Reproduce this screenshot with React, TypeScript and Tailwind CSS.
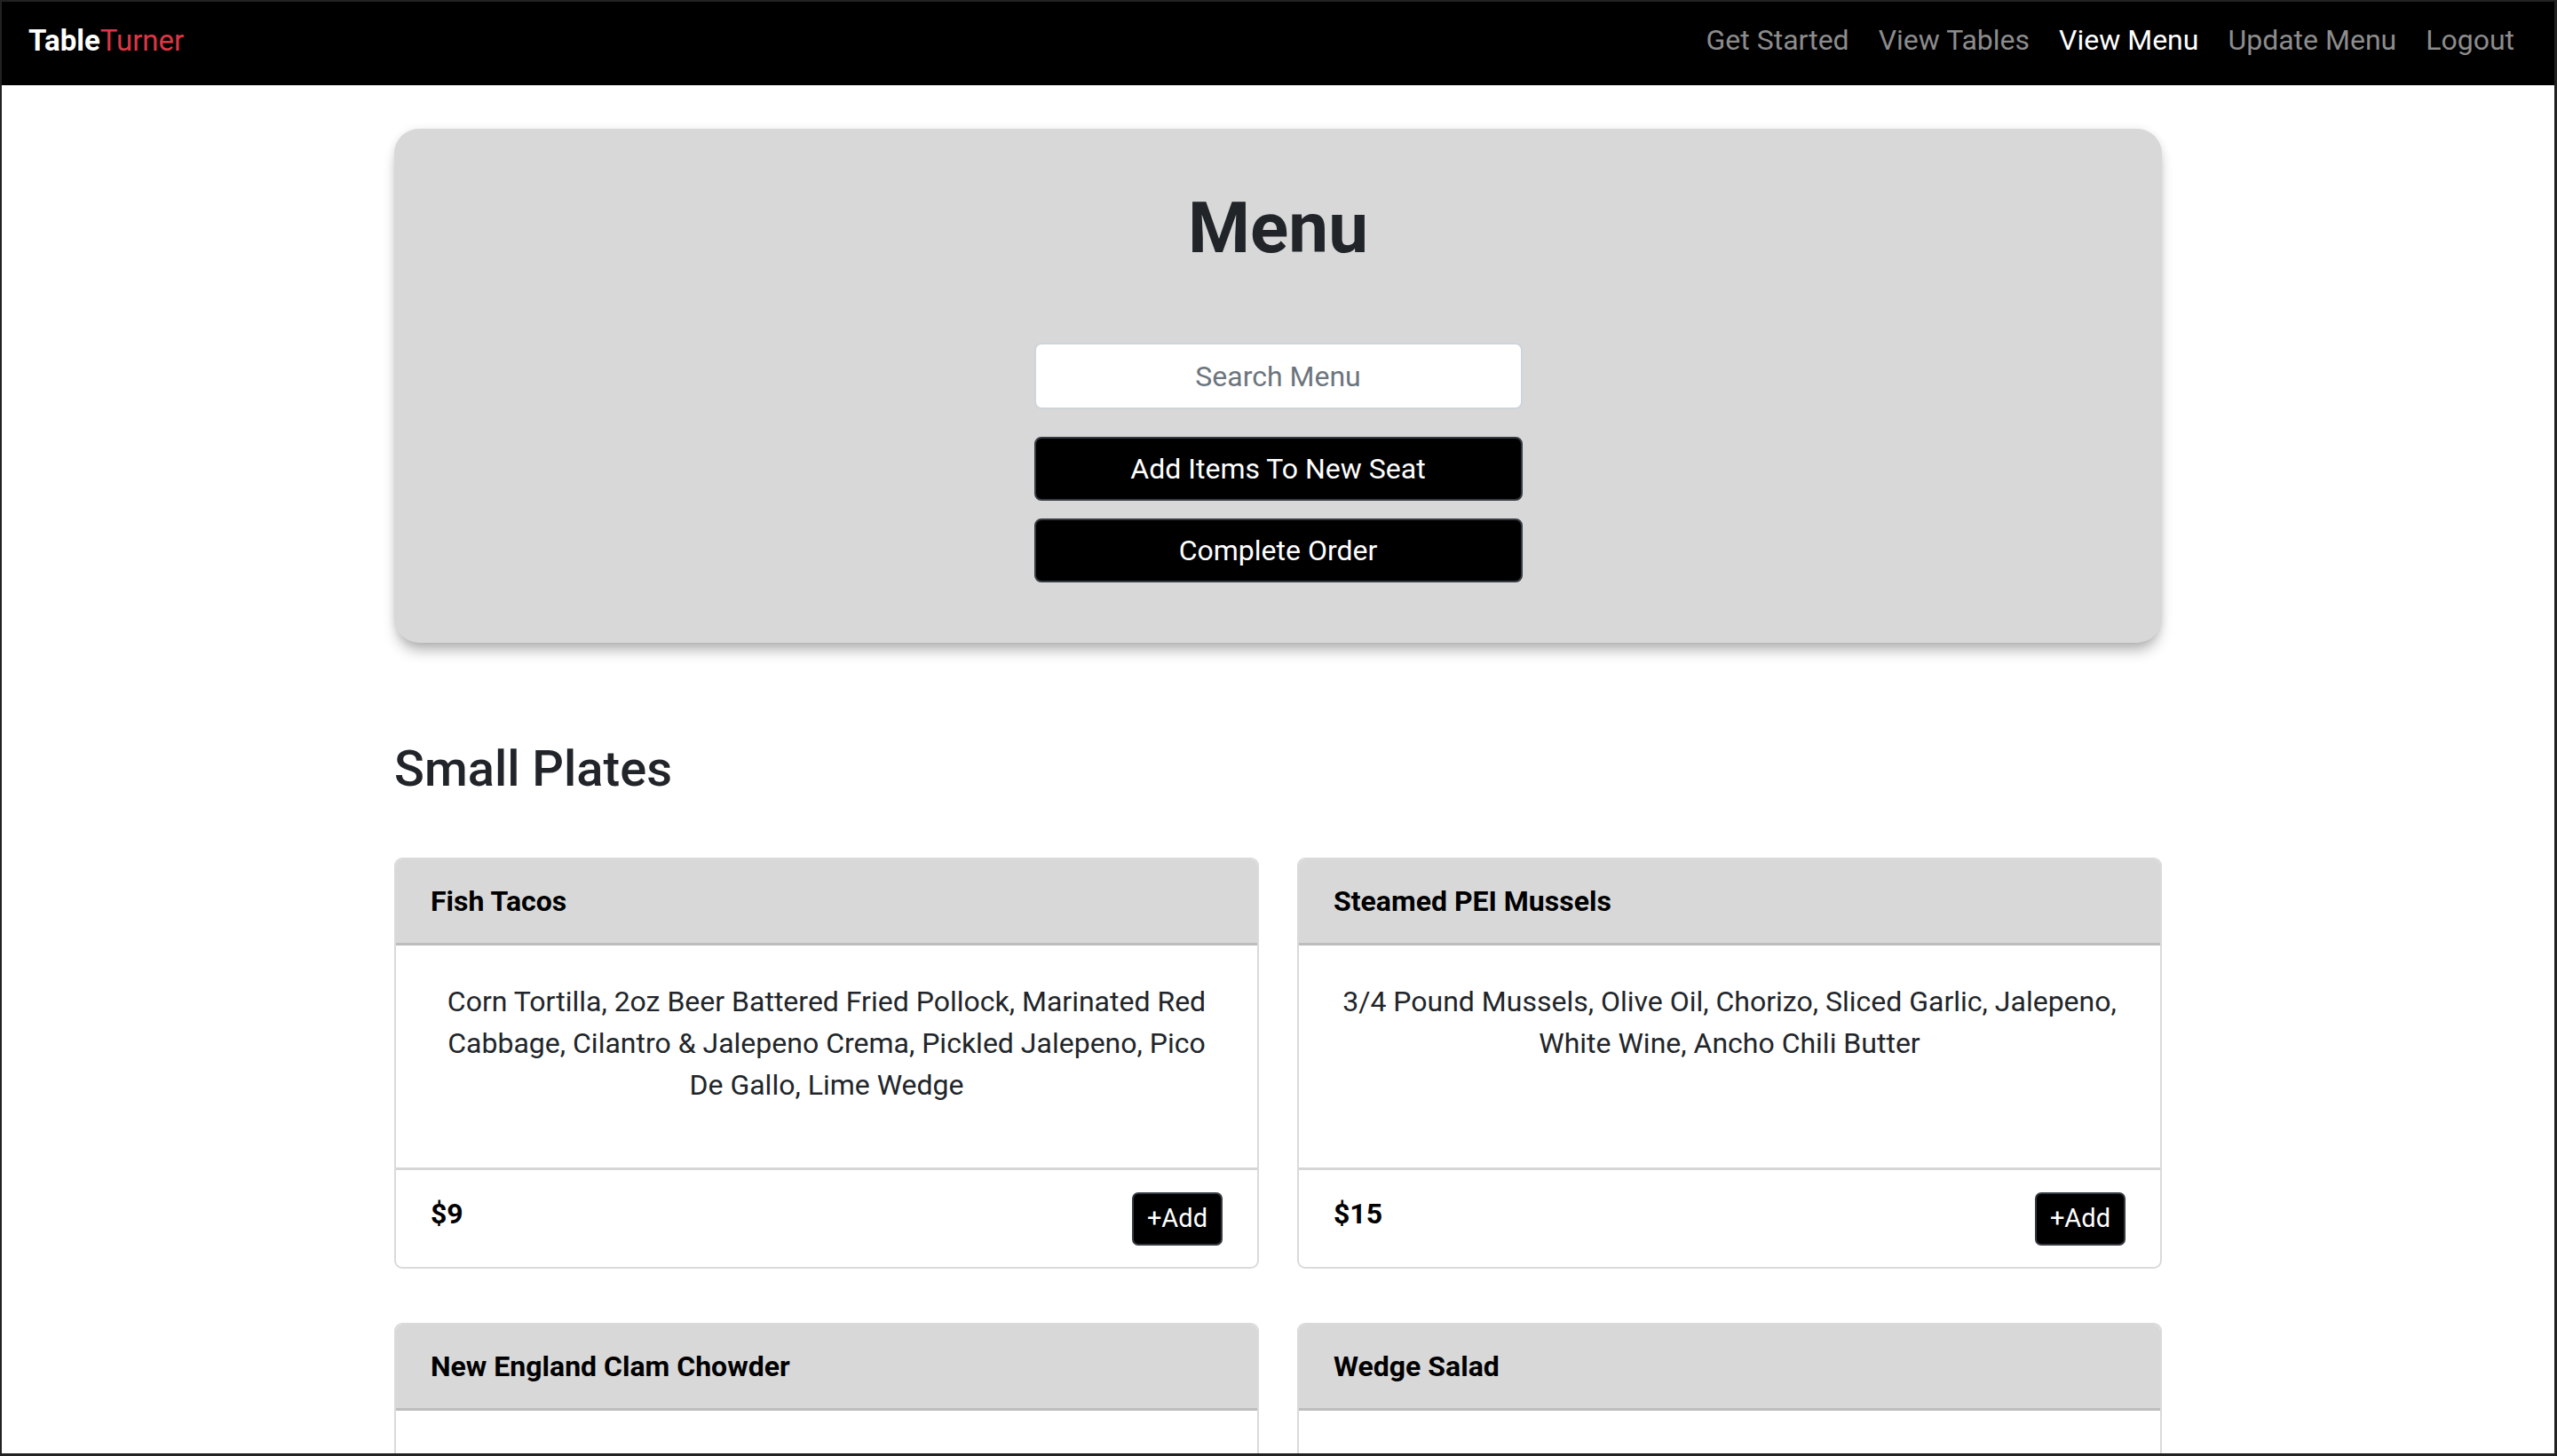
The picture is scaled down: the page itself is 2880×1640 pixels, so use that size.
const items = [
  {
    name: "Fish Tacos",
    desc: "Corn Tortilla, 2oz Beer Battered Fried Pollock, Marinated Red Cabbage, Cilantro & Jalepeno Crema, Pickled Jalepeno, Pico De Gallo, Lime Wedge",
    price: 9,
  },
  {
    name: "Steamed PEI Mussels",
    desc: "3/4 Pound Mussels, Olive Oil, Chorizo, Sliced Garlic, Jalepeno, White Wine, Ancho Chili Butter",
    price: 15,
  },
  // descriptions for this row sit below the fold
  { name: "New England Clam Chowder", desc: "", price: 7 },
  { name: "Wedge Salad", desc: "", price: 10 },
];

const links = ["Get Started", "View Tables", "View Menu", "Update Menu", "Logout"];

export default function App() {
  return (
    <div className="h-[1640px] overflow-hidden border-t-2 border-l-2 border-r-[3px] border-b-[3px] border-[#222] bg-white font-['Roboto','Liberation_Sans',sans-serif] text-[#212529]">
      <nav className="h-[94px] bg-black flex items-center justify-between pl-[30px] pr-[45px] pb-[8px]">
        <a className="text-[33px] leading-none">
          <span className="font-bold text-white">Table</span>
          <span className="text-[#dc3545]">Turner</span>
        </a>
        <div className="flex gap-[33px] text-[32px] leading-none">
          {links.map((l) => (
            <a key={l} className={l === "View Menu" ? "text-white" : "text-[#8c8c8c]"}>
              {l}
            </a>
          ))}
        </div>
      </nav>

      <main className="w-[1991px] mx-auto pt-[49px]">
        <div className="bg-[#d8d8d8] rounded-[28px] shadow-[0_12px_16px_-4px_rgba(0,0,0,0.3),0_0_10px_rgba(0,0,0,0.08)] flex flex-col items-center pt-[64px] pb-[68px]">
          <h1 className="text-[80px] leading-[96px] font-bold">Menu</h1>
          <input
            placeholder="Search Menu"
            className="mt-[81px] w-[550px] h-[75px] bg-white border-2 border-[#ced4da] rounded-[8px] text-center text-[32px] placeholder:text-[#6c757d] outline-none"
          />
          <button className="mt-[31px] w-[550px] h-[72px] bg-black text-white text-[32px] border-2 border-[#343a40] rounded-[8px]">
            Add Items To New Seat
          </button>
          <button className="mt-[20px] w-[550px] h-[72px] bg-black text-white text-[32px] border-2 border-[#343a40] rounded-[8px]">
            Complete Order
          </button>
        </div>

        <h2 className="mt-[109px] text-[56px] leading-[67px] font-medium">Small Plates</h2>

        <div className="mt-[66px] grid grid-cols-2 gap-x-[43px] gap-y-[61px]">
          {items.map((it) => (
            <MenuCard key={it.name} {...it} />
          ))}
        </div>
      </main>
    </div>
  );
}

function MenuCard({ name, desc, price }: { name: string; desc: string; price: number }) {
  return (
    <div className="flex flex-col border-2 border-[#dadada] rounded-[9px] overflow-hidden">
      <div className="bg-[#d8d8d8] border-b-[3px] border-[#bdbdbd] px-[39px] py-[23px]">
        <h5 className="text-[32px] leading-[48px] font-bold text-black">{name}</h5>
      </div>
      <div className="flex-1 px-[39px] pt-[40px] pb-[40px]">
        <p className="text-center text-[32px] leading-[47px] mb-[29px] min-h-[141px]">{desc}</p>
      </div>
      <div className="border-t-[3px] border-[#d6d6d6] px-[39px] pt-[25px] pb-[24px] flex justify-between items-start">
        <span className="text-[32px] leading-[48px] font-bold text-black">${price}</span>
        <button className="h-[60px] px-[15px] bg-black text-white text-[29px] border-2 border-[#343a40] rounded-[7px]">
          +Add
        </button>
      </div>
    </div>
  );
}
